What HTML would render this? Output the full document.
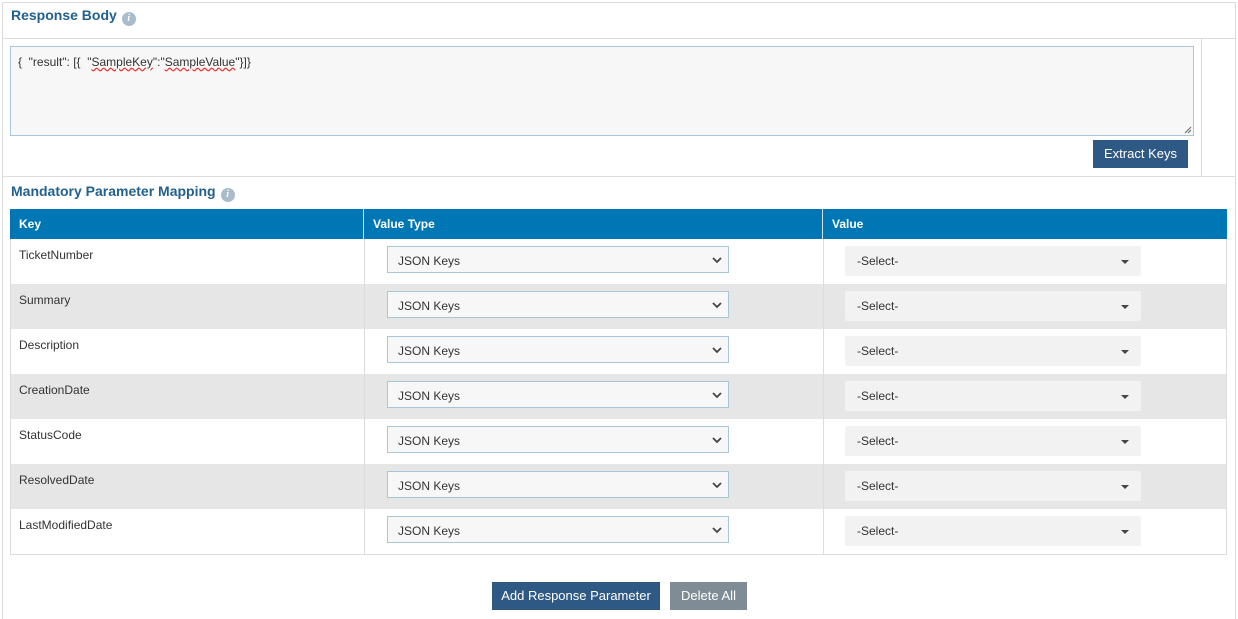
<!DOCTYPE html>
<html style="width:1238px;height:619px;overflow:hidden"><head><meta charset="utf-8"><style>
*{box-sizing:border-box;margin:0;padding:0}
body{width:1238px;height:619px;background:#fff;font-family:"Liberation Sans",Arial,sans-serif;position:relative;overflow:hidden;color:#333}
.a{position:absolute}
.h{font-weight:bold;font-size:14px;color:#22608f}
.info{display:inline-block;width:14px;height:14px;border-radius:50%;background:#a9bccb;color:#fff;font-size:10px;font-style:italic;font-weight:bold;text-align:center;line-height:14px;vertical-align:-1px;margin-left:5px;font-family:"Liberation Serif",serif}
.row{position:absolute;left:10px;width:1217px;height:46px;border:1px solid #dcdcdc;border-top:none}
.row .k{position:absolute;left:8px;top:9px;font-size:12px;color:#333}
.row .c1{position:absolute;left:353px;top:0;bottom:0;border-left:1px solid #dcdcdc}
.row .c2{position:absolute;left:812px;top:0;bottom:0;border-left:1px solid #dcdcdc}
.sel{position:absolute;left:376px;top:7px;width:342px;height:27px;border:1px solid #a8c6d8;background:#f7f7f7;font-size:12px;padding:7px 0 0 10px;color:#333}
.sel svg{position:absolute;right:6px;top:9px}
.v{position:absolute;left:834px;top:7px;width:296px;height:30px;background:#f2f2f2;border-radius:2px;font-size:12px;padding:8px 0 0 12px;color:#333}
.v:after{content:"";position:absolute;right:12px;top:14px;border-left:4px solid transparent;border-right:4px solid transparent;border-top:4px solid #444}
.btn{position:absolute;color:#fff;font-size:13px;text-align:center;line-height:28px;height:28px}
</style></head><body>
<div class="a" style="left:2px;top:2px;width:1234px;height:617px;border:1px solid #dcdcdc;border-bottom:none"></div>
<div class="a" style="left:2px;top:38px;width:1234px;border-top:1px solid #dcdcdc"></div>
<div class="a" style="left:2px;top:176px;width:1234px;border-top:1px solid #dcdcdc"></div>
<div class="a" style="left:1201px;top:38px;height:138px;border-left:1px solid #dcdcdc"></div>
<div class="a h" style="left:11px;top:7px">Response Body<span class="info">i</span></div>
<div class="a" style="left:10px;top:46px;width:1184px;height:90px;border:1px solid #a8c6d8;background:#f7f7f7;font-size:12px;padding:8px 0 0 7px;color:#333">{&nbsp; "result": [{&nbsp; "<span style="text-decoration:underline wavy #e33">SampleKey</span>":"<span style="text-decoration:underline wavy #e33">SampleValue</span>"}]}
<svg class="a" style="right:1px;bottom:1px" width="9" height="9"><path d="M8 2L2 8M8 5L5 8" stroke="#666" stroke-width="1"/></svg></div>
<div class="btn" style="left:1093px;top:140px;width:95px;background:#2f5985">Extract Keys</div>
<div class="a h" style="left:11px;top:183px">Mandatory Parameter Mapping<span class="info">i</span></div>
<div class="a" style="left:10px;top:209px;width:1217px;height:30px;background:#0077b5;color:#fff;font-weight:bold;font-size:12px">
<span class="a" style="left:9px;top:8px">Key</span>
<span class="a" style="left:353px;top:0;bottom:0;border-left:1px solid #dcdcdc"></span>
<span class="a" style="left:363px;top:8px">Value Type</span>
<span class="a" style="left:812px;top:0;bottom:0;border-left:1px solid #dcdcdc"></span>
<span class="a" style="left:822px;top:8px">Value</span>
</div>
<div class="row" style="top:239px;background:#fff"><span class="k">TicketNumber</span><span class="c1"></span><span class="c2"></span><div class="sel">JSON Keys<svg width="10" height="8"><path d="M1 2l4 4 4-4" stroke="#444" stroke-width="1.8" fill="none"/></svg></div><div class="v">-Select-</div></div>
<div class="row" style="top:284px;background:#e6e6e6"><span class="k">Summary</span><span class="c1"></span><span class="c2"></span><div class="sel">JSON Keys<svg width="10" height="8"><path d="M1 2l4 4 4-4" stroke="#444" stroke-width="1.8" fill="none"/></svg></div><div class="v">-Select-</div></div>
<div class="row" style="top:329px;background:#fff"><span class="k">Description</span><span class="c1"></span><span class="c2"></span><div class="sel">JSON Keys<svg width="10" height="8"><path d="M1 2l4 4 4-4" stroke="#444" stroke-width="1.8" fill="none"/></svg></div><div class="v">-Select-</div></div>
<div class="row" style="top:374px;background:#e6e6e6"><span class="k">CreationDate</span><span class="c1"></span><span class="c2"></span><div class="sel">JSON Keys<svg width="10" height="8"><path d="M1 2l4 4 4-4" stroke="#444" stroke-width="1.8" fill="none"/></svg></div><div class="v">-Select-</div></div>
<div class="row" style="top:419px;background:#fff"><span class="k">StatusCode</span><span class="c1"></span><span class="c2"></span><div class="sel">JSON Keys<svg width="10" height="8"><path d="M1 2l4 4 4-4" stroke="#444" stroke-width="1.8" fill="none"/></svg></div><div class="v">-Select-</div></div>
<div class="row" style="top:464px;background:#e6e6e6"><span class="k">ResolvedDate</span><span class="c1"></span><span class="c2"></span><div class="sel">JSON Keys<svg width="10" height="8"><path d="M1 2l4 4 4-4" stroke="#444" stroke-width="1.8" fill="none"/></svg></div><div class="v">-Select-</div></div>
<div class="row" style="top:509px;background:#fff"><span class="k">LastModifiedDate</span><span class="c1"></span><span class="c2"></span><div class="sel">JSON Keys<svg width="10" height="8"><path d="M1 2l4 4 4-4" stroke="#444" stroke-width="1.8" fill="none"/></svg></div><div class="v">-Select-</div></div>
<div class="btn" style="left:492px;top:582px;width:168px;background:#2f5985">Add Response Parameter</div>
<div class="btn" style="left:670px;top:582px;width:77px;background:#7f8c95">Delete All</div>
</body></html>
